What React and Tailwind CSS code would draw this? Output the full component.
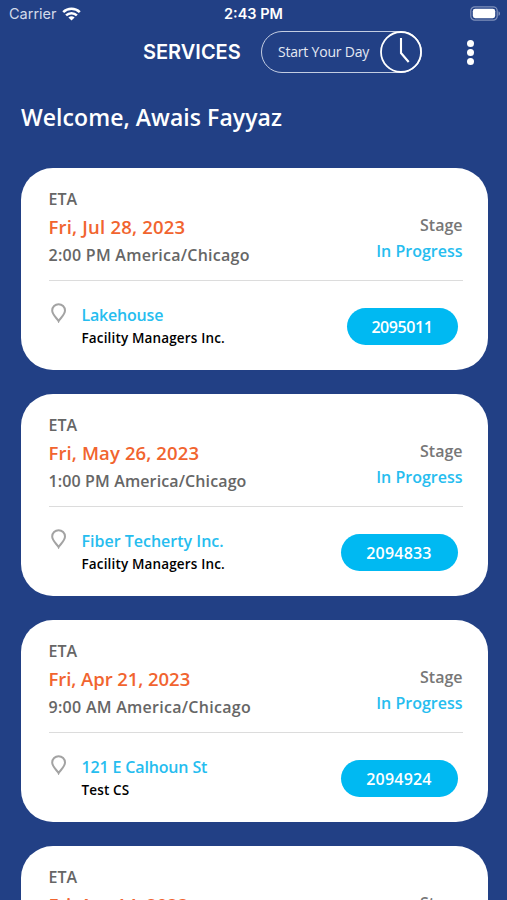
import React from 'react';

const services = [
  {
    date: 'Fri, Jul 28, 2023', dateClass: 'tracking-[0.2px]',
    time: '2:00 PM America/Chicago', timeClass: 'tracking-[0.26px]',
    site: 'Lakehouse', siteClass: 'tracking-[-0.2px]',
    company: 'Facility Managers Inc.',
    number: '2095011', pillClass: 'w-[111px] tracking-[-0.4px]',
  },
  {
    date: 'Fri, May 26, 2023', dateClass: 'tracking-[0.12px]',
    time: '1:00 PM America/Chicago', timeClass: 'tracking-[0.12px]',
    site: 'Fiber Techerty Inc.', siteClass: 'tracking-normal',
    company: 'Facility Managers Inc.',
    number: '2094833', pillClass: 'w-[117px] tracking-[0.2px]',
  },
  {
    date: 'Fri, Apr 21, 2023', dateClass: 'tracking-[-0.06px]',
    time: '9:00 AM America/Chicago', timeClass: 'tracking-[0.28px]',
    site: '121 E Calhoun St', siteClass: 'tracking-[-0.15px]',
    company: 'Test CS',
    number: '2094924', pillClass: 'w-[117px] tracking-[0.2px]',
  },
  {
    date: 'Fri, Apr 14, 2023', dateClass: 'tracking-[-0.2px]',
    time: '9:00 AM America/Chicago', timeClass: 'tracking-[0.28px]',
    site: 'Lakehouse', siteClass: 'tracking-[-0.2px]',
    company: 'Facility Managers Inc.',
    number: '2094911', pillClass: 'w-[117px] tracking-[0.2px]',
  },
];

const WifiIcon = () => (
  <svg width="19" height="14" viewBox="0 0 19 14" fill="none" stroke="white" strokeWidth="2.5">
    <path d="M1.2 5.2a11.8 11.8 0 0 1 16.6 0" />
    <path d="M4.1 8.4a7.6 7.6 0 0 1 10.8 0" />
    <path d="M9.5 13.6 6.4 10.6a4.5 4.5 0 0 1 6.2 0Z" fill="white" stroke="none" />
  </svg>
);

const BatteryIcon = () => (
  <svg width="31" height="15" viewBox="0 0 31 15">
    <rect x="0.8" y="0.8" width="26.4" height="13.4" rx="4" fill="none" stroke="#7f90bb" strokeWidth="1.2" />
    <rect x="2.8" y="2.8" width="22.4" height="9.4" rx="2.4" fill="white" />
    <path d="M28.5 5.2c2 .8 2 3.8 0 4.6Z" fill="#7f90bb" />
  </svg>
);

const ClockIcon = () => (
  <svg width="42" height="42" viewBox="0 0 42 42" fill="none" stroke="white">
    <circle cx="21" cy="21" r="20" strokeWidth="1.8" />
    <path d="M21 7V22L28.7 31" strokeWidth="2.1" />
  </svg>
);

const PinIcon = () => (
  <svg width="16" height="20" viewBox="0 0 16 20" fill="none" stroke="#a3a3a3" strokeWidth="2">
    <path d="M7.6 18.2C6.3 15.4 1.2 12 1.2 7.6a6.4 6.4 0 0 1 12.8 0C14 12 8.9 15.4 7.6 18.2Z" />
  </svg>
);

const ServiceCard = ({ service }) => (
  <div className="h-[202px] shrink-0 rounded-[32px] bg-white pl-7 pr-[25px]">
    <div className="flex h-[113px] justify-between border-b border-[#dcdcdc] pt-[18px] font-semibold text-[#666666]">
      <div className="whitespace-nowrap">
        <div className="h-[27px] text-base leading-[26px]">ETA</div>
        <div className={`h-[29px] text-[18.5px] leading-[28px] text-[#f1642f] ${service.dateClass}`}>{service.date}</div>
        <div className={`h-7 text-base leading-[26px] ${service.timeClass}`}>{service.time}</div>
      </div>
      <div className="pt-[26px] text-right text-base leading-[26px]">
        <div className="text-[#777777]">Stage</div>
        <div className="text-[#26bdef]">In Progress</div>
      </div>
    </div>
    <div className="flex pt-[22px]">
      <div className="w-[33px] pl-[2px]"><PinIcon /></div>
      <div className="flex-1 whitespace-nowrap">
        <div className={`text-base font-semibold leading-[24px] text-[#26bdef] ${service.siteClass}`}>{service.site}</div>
        <div className="text-[13.5px] font-semibold leading-[23px] tracking-[0.15px] text-black">{service.company}</div>
      </div>
      <div className={`mr-[5px] mt-[5px] flex h-[37px] items-center justify-center rounded-full bg-[#00b9f2] text-base font-semibold text-white ${service.pillClass}`}>
        {service.number}
      </div>
    </div>
  </div>
);

const App = () => {
  return (
    <div className="flex h-[900px] w-[507px] flex-col overflow-hidden bg-[#224085] font-['Open_Sans',sans-serif] text-white">
      {/* STATUS BAR */}
      <div className="grid h-[27px] shrink-0 grid-cols-3 items-center pl-[9px] pr-[6px] font-['Inter',sans-serif] text-[14.5px]">
        <div className="flex items-center gap-[5px] text-[#d3daea]">Carrier <WifiIcon /></div>
        <div className="pr-[3px] text-center font-semibold">2:43 PM</div>
        <div className="flex justify-end"><BatteryIcon /></div>
      </div>

      {/* HEADER */}
      <div className="flex h-[50px] shrink-0 items-center pl-[143px] pr-[33px]">
        <h1 className="w-[118px] font-['Inter',sans-serif] text-[20px] font-semibold">SERVICES</h1>
        <button className="flex h-[42px] w-[161px] items-center justify-between rounded-full border-[1.5px] border-[#c3cde2] pl-4 text-sm tracking-[-0.2px] text-[#e4e9f3]">
          Start Your Day
          <span className="-mr-[1px] shrink-0"><ClockIcon /></span>
        </button>
        <div className="ml-auto flex flex-col gap-[2px]">
          <span className="size-[7px] rounded-full bg-white" />
          <span className="size-[7px] rounded-full bg-white" />
          <span className="size-[7px] rounded-full bg-white" />
        </div>
      </div>

      <h2 className="h-[91px] shrink-0 pl-[21px] pt-[23px] text-[23px] font-semibold leading-[34px] tracking-[0.06px]">Welcome, Awais Fayyaz</h2>

      {/* SERVICE LIST */}
      <div className="flex flex-col gap-6 pl-[20.5px] pr-[19.5px]">
        {services.map((service) => (
          <ServiceCard key={service.date} service={service} />
        ))}
      </div>
    </div>
  );
};

export default App;
